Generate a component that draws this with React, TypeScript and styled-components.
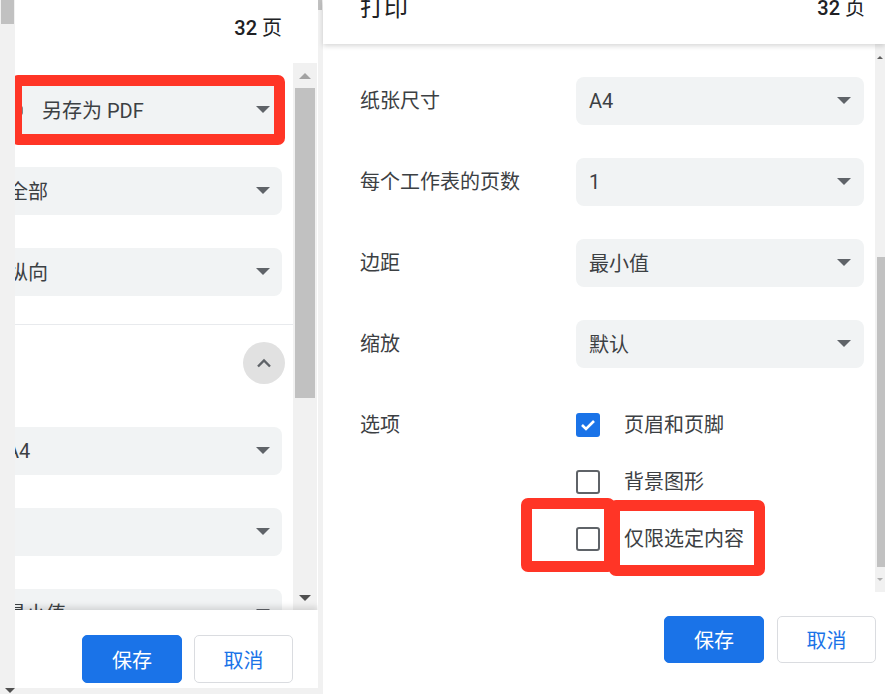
import React from "react";
import styled, { createGlobalStyle } from "styled-components";

const GlobalStyle = createGlobalStyle`
  html, body {
    margin: 0;
    padding: 0;
    background: #f1f1f1;
  }
  body {
    font-family: Roboto, "Noto Sans CJK SC", sans-serif;
    color: #3c4043;
  }
  * {
    box-sizing: border-box;
  }
`;

const Screen = styled.div`
  position: relative;
  display: flex;
  width: 885px;
  height: 694px;
  overflow: hidden;
  background: #f1f1f1;
`;

/* thin grey strips between the two captures */
const Gutter = styled.div<{ $w: number }>`
  flex: none;
  width: ${(p) => p.$w}px;
  height: 100%;
  display: flex;
  flex-direction: column;
  justify-content: space-between;
  background: #f1f1f1;
`;

const GutterThumb = styled.div<{ $w: number; $h: number; $ml: number }>`
  width: ${(p) => p.$w}px;
  height: ${(p) => p.$h}px;
  margin-left: ${(p) => p.$ml}px;
  background: #c1c1c1;
`;

const Arrow = styled.span<{ $up?: boolean; $size: number; $color: string }>`
  display: block;
  width: 0;
  height: 0;
  border-left: ${(p) => p.$size}px solid transparent;
  border-right: ${(p) => p.$size}px solid transparent;
  ${(p) =>
    p.$up
      ? `border-bottom: ${p.$size}px solid ${p.$color};`
      : `border-top: ${p.$size}px solid ${p.$color};`}
`;

const GutterArrow = styled.div`
  display: flex;
  justify-content: center;
  height: 6px;
  padding-left: 4px;
`;

/* ---------- left capture ---------- */
const SidePanel = styled.div`
  position: relative;
  flex: none;
  width: 303px;
  height: 688px;
  display: flex;
  flex-direction: column;
  background: #fff;
  overflow: hidden;
`;

const SideHeader = styled.div`
  flex: none;
  height: 63px;
  display: flex;
  justify-content: flex-end;
  align-items: flex-start;
  padding: 15px 36px 0 0;
  font-size: 20px;
  line-height: 26px;
  color: #202124;
`;

const Num = styled.span`
  font-weight: 500;
  margin-right: 5px;
`;

const SideBody = styled.div`
  flex: 1;
  min-height: 0;
  display: flex;
`;

const SideForm = styled.div`
  flex: 1;
  overflow: hidden;
`;

const SideFormInner = styled.div`
  margin-left: -21px;
  padding-top: 23px;
`;

const SideSection = styled.div<{ $top?: number; $bottom?: number; $line?: boolean }>`
  display: flex;
  flex-direction: column;
  gap: 33px;
  padding: ${(p) => p.$top ?? 0}px 11px ${(p) => p.$bottom ?? 0}px 0;
  border-bottom: ${(p) => (p.$line ? "1px solid #e8eaed" : "none")};
`;

const Select = styled.div<{ $pl: number; $pr: number }>`
  height: 48px;
  flex: none;
  display: flex;
  align-items: center;
  padding: 0 ${(p) => p.$pr}px 1px ${(p) => p.$pl}px;
  border-radius: 8px;
  background: #f1f3f4;
  font-size: 20px;
  color: #3c4043;
`;

const SelectText = styled.span`
  flex: 1;
  white-space: nowrap;
`;

const PrinterIcon = styled.svg`
  flex: none;
  margin-right: 17px;
`;

const CollapseRow = styled.div`
  display: flex;
  justify-content: flex-end;
  margin-right: -3px;
  margin-bottom: 10px;
`;

const RoundButton = styled.div`
  width: 42px;
  height: 42px;
  border-radius: 50%;
  background: #e1e1e1;
  display: flex;
  align-items: center;
  justify-content: center;
`;

const Track = styled.div<{ $w: number; $mr: number }>`
  flex: none;
  width: ${(p) => p.$w}px;
  margin-right: ${(p) => p.$mr}px;
  display: flex;
  flex-direction: column;
  align-items: center;
  background: #f1f1f1;
`;

const TrackCap = styled.div<{ $h: number }>`
  flex: none;
  height: ${(p) => p.$h}px;
  display: flex;
  align-items: center;
  justify-content: center;
`;

const TrackThumb = styled.div<{ $w: number; $h: number; $ml?: number }>`
  flex: none;
  width: ${(p) => p.$w}px;
  height: ${(p) => p.$h}px;
  margin-left: ${(p) => p.$ml ?? 0}px;
  background: #c1c1c1;
`;

const TrackFill = styled.div`
  flex: 1;
`;

const Footer = styled.div<{ $h: number; $pt: number; $pr: number; $gap: number; $shadow?: boolean }>`
  position: relative;
  z-index: 1;
  flex: none;
  height: ${(p) => p.$h}px;
  display: flex;
  justify-content: flex-end;
  align-items: flex-start;
  gap: ${(p) => p.$gap}px;
  padding: ${(p) => p.$pt}px ${(p) => p.$pr}px 0 0;
  background: #fff;
  box-shadow: ${(p) => (p.$shadow ? "0 -3px 6px rgba(0, 0, 0, 0.13)" : "none")};
`;

const Button = styled.button<{ $primary?: boolean; $w: number; $h: number }>`
  width: ${(p) => p.$w}px;
  height: ${(p) => p.$h}px;
  border-radius: 5px;
  font-family: inherit;
  font-size: 20px;
  cursor: pointer;
  border: 1px solid ${(p) => (p.$primary ? "#1a73e8" : "#dadce0")};
  background: ${(p) => (p.$primary ? "#1a73e8" : "#fff")};
  color: ${(p) => (p.$primary ? "#fff" : "#1a73e8")};
`;

/* ---------- right capture ---------- */
const MainPanel = styled.div`
  flex: 1;
  height: 100%;
  display: flex;
  flex-direction: column;
  background: #fff;
`;

const MainHeader = styled.div`
  position: relative;
  z-index: 2;
  flex: none;
  height: 44px;
  display: flex;
  justify-content: space-between;
  align-items: flex-start;
  padding: 0 20px 0 37px;
  background: #fff;
  box-shadow: 0 2px 5px rgba(0, 0, 0, 0.16);
  color: #202124;
`;

const Title = styled.div`
  font-size: 24px;
  line-height: 24px;
  margin-top: -4px;
`;

const PageCount = styled.div`
  font-size: 20px;
  line-height: 20px;
  margin-top: -2px;
`;

const MainBody = styled.div`
  flex: 1;
  min-height: 0;
  display: flex;
`;

const MainForm = styled.div`
  flex: 1;
  display: flex;
  flex-direction: column;
  gap: 33px;
  padding: 33px 11px 0 37px;
`;

const Row = styled.div<{ $mt?: number }>`
  display: grid;
  grid-template-columns: 216px 1fr;
  align-items: ${(p) => (p.$mt ? "start" : "center")};
  margin-top: ${(p) => p.$mt ?? 0}px;
`;

const Label = styled.div`
  font-size: 20px;
  line-height: 24px;
  color: #3c4043;
`;

const CheckList = styled.div`
  display: flex;
  flex-direction: column;
  gap: 33px;
`;

const CheckRow = styled.label`
  display: flex;
  align-items: center;
  gap: 24px;
  font-size: 20px;
  line-height: 24px;
  color: #3c4043;
`;

const Box = styled.span<{ $checked?: boolean }>`
  flex: none;
  width: 24px;
  height: 24px;
  border-radius: 3px;
  display: flex;
  align-items: center;
  justify-content: center;
  background: ${(p) => (p.$checked ? "#1a73e8" : "#fff")};
  border: ${(p) => (p.$checked ? "none" : "2.5px solid #5f6368")};
`;

/* red annotation frames drawn over the captures */
const Mark = styled.div<{ $x: number; $y: number; $w: number; $h: number }>`
  position: absolute;
  left: ${(p) => p.$x}px;
  top: ${(p) => p.$y}px;
  width: ${(p) => p.$w}px;
  height: ${(p) => p.$h}px;
  border: 11px solid #ff3526;
  border-radius: 7px;
  pointer-events: none;
  z-index: 5;
`;

const Caret = () => <Arrow $size={7} $color="#5f6368" />;

const sideTop = ["全部", "纵向"];
const sideBottom = ["A4", "", "最小值"];

const mainRows = [
  { label: "纸张尺寸", value: "A4" },
  { label: "每个工作表的页数", value: "1" },
  { label: "边距", value: "最小值" },
  { label: "缩放", value: "默认" },
];

const options = [
  { text: "页眉和页脚", checked: true },
  { text: "背景图形", checked: false },
  { text: "仅限选定内容", checked: false },
];

export default function App() {
  return (
    <>
      <GlobalStyle />
      <Screen>
        <Gutter $w={15}>
          <GutterThumb $w={13} $h={24} $ml={1} />
          <GutterArrow>
            <Arrow $size={5} $color="#505050" />
          </GutterArrow>
        </Gutter>

        <SidePanel>
          <SideHeader>
            <Num>32</Num>页
          </SideHeader>
          <SideBody>
            <SideForm>
              <SideFormInner>
                <SideSection $bottom={28} $line>
                  <Select $pl={11} $pr={12}>
                    <PrinterIcon width="20" height="20" viewBox="0 0 20 20">
                      <rect x="2" y="6" width="16" height="9" rx="2" fill="#80868b" />
                      <rect x="5" y="2" width="10" height="5" fill="#80868b" />
                      <rect x="5" y="12" width="10" height="6" fill="#80868b" />
                    </PrinterIcon>
                    <SelectText>另存为 PDF</SelectText>
                    <Caret />
                  </Select>
                  {sideTop.map((t) => (
                    <Select key={t} $pl={14} $pr={12}>
                      <SelectText>{t}</SelectText>
                      <Caret />
                    </Select>
                  ))}
                </SideSection>
                <SideSection $top={17}>
                  <CollapseRow>
                    <RoundButton>
                      <svg width="16" height="10" viewBox="0 0 16 10">
                        <path d="M2 8.5 L8 2.5 L14 8.5" fill="none" stroke="#5f6368" strokeWidth="2.4" />
                      </svg>
                    </RoundButton>
                  </CollapseRow>
                  {sideBottom.map((t, i) => (
                    <Select key={i} $pl={12} $pr={12}>
                      <SelectText>{t}</SelectText>
                      <Caret />
                    </Select>
                  ))}
                </SideSection>
              </SideFormInner>
            </SideForm>
            <Track $w={24} $mr={1}>
              <TrackCap $h={25}>
                <Arrow $up $size={6} $color="#a3a3a3" />
              </TrackCap>
              <TrackThumb $w={20} $h={310} />
              <TrackFill />
              <TrackCap $h={25}>
                <Arrow $size={6} $color="#505050" />
              </TrackCap>
            </Track>
          </SideBody>
          <Footer $h={78} $pt={25} $pr={25} $gap={12} $shadow>
            <Button $primary $w={100} $h={48}>
              保存
            </Button>
            <Button $w={99} $h={48}>
              取消
            </Button>
          </Footer>
          <Mark $x={-4} $y={75} $w={274} $h={70} />
        </SidePanel>

        <Gutter $w={5}>
          <GutterThumb $w={4} $h={10} $ml={0} />
        </Gutter>

        <MainPanel>
          <MainHeader>
            <Title>打印</Title>
            <PageCount>
              <Num>32</Num>页
            </PageCount>
          </MainHeader>
          <MainBody>
            <MainForm>
              {mainRows.map((r) => (
                <Row key={r.label}>
                  <Label>{r.label}</Label>
                  <Select $pl={13} $pr={13}>
                    <SelectText>{r.value}</SelectText>
                    <Caret />
                  </Select>
                </Row>
              ))}
              <Row $mt={12}>
                <Label>选项</Label>
                <CheckList>
                  {options.map((o) => (
                    <CheckRow key={o.text}>
                      <Box $checked={o.checked}>
                        {o.checked && (
                          <svg width="16" height="12" viewBox="0 0 16 12">
                            <path d="M2 6 L6 10 L14 2" fill="none" stroke="#fff" strokeWidth="2.6" />
                          </svg>
                        )}
                      </Box>
                      {o.text}
                    </CheckRow>
                  ))}
                </CheckList>
              </Row>
            </MainForm>
            <Track $w={10} $mr={0}>
              <TrackCap $h={26}>
                <Arrow $up $size={3} $color="#606060" />
              </TrackCap>
              <TrackFill />
              <TrackThumb $w={8} $h={310} $ml={2} />
              <TrackCap $h={25}>
                <Arrow $size={3} $color="#b0b0b0" />
              </TrackCap>
            </Track>
          </MainBody>
          <Footer $h={102} $pt={24} $pr={9} $gap={13}>
            <Button $primary $w={100} $h={47}>
              保存
            </Button>
            <Button $w={99} $h={47}>
              取消
            </Button>
          </Footer>
        </MainPanel>

        <Mark $x={521} $y={498} $w={94} $h={74} />
        <Mark $x={609} $y={500} $w={156} $h={76} />
      </Screen>
    </>
  );
}
